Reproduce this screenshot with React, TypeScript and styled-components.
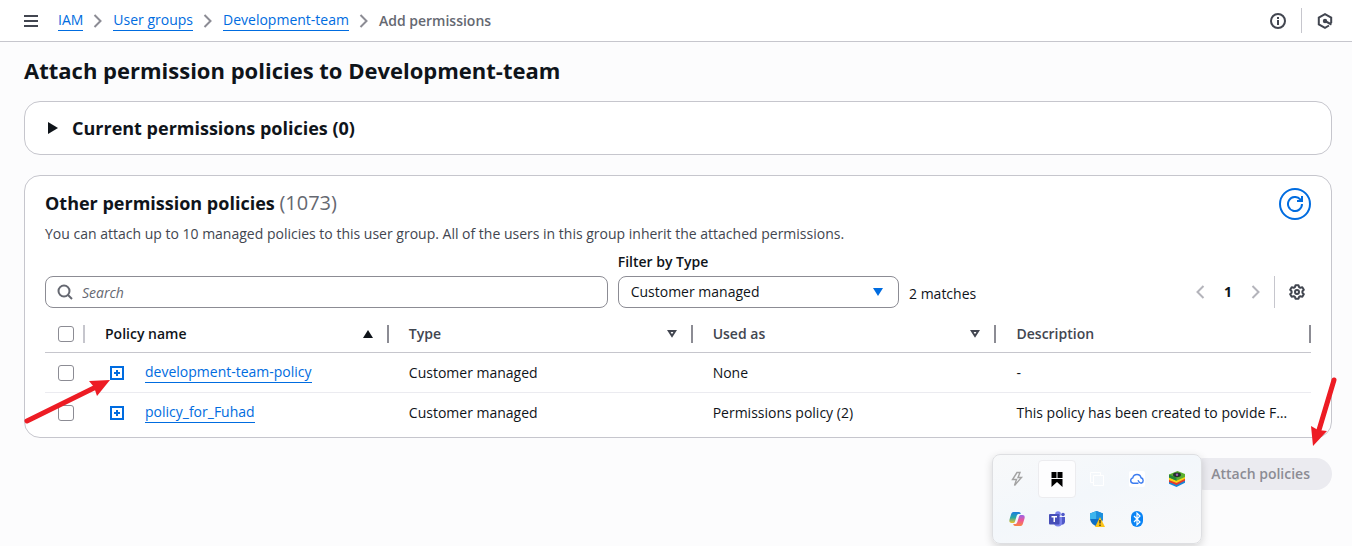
import React from "react";
import styled, { createGlobalStyle } from "styled-components";

const font = `"Open Sans", "Noto Sans", sans-serif`;
const color = {
  text: "#0f141a",
  secondary: "#424650",
  muted: "#656871",
  link: "#006ce0",
  border: "#c6c6cd",
  control: "#8c8c94",
  disabled: "#b4b4bb",
  page: "#fcfcfd",
};

const GlobalStyle = createGlobalStyle`
  *, *::before, *::after { box-sizing: border-box; }
  body { margin: 0; background: ${color.page}; color: ${color.text}; font: 14px/20px ${font}; }
  button, input, select { font: inherit; color: inherit; }
  h1, h2, p, ol { margin: 0; padding: 0; }
`;

const Page = styled.div`
  position: relative;
  min-height: 100vh;
  overflow-x: hidden;
`;

const TopBar = styled.header`
  display: flex;
  align-items: center;
  height: 42px;
  padding: 0 19px 0 23px;
  background: #fff;
  border-bottom: 1px solid ${color.border};
`;

const IconButton = styled.button<{ $accent?: boolean }>`
  display: flex;
  align-items: center;
  justify-content: center;
  width: 16px;
  height: 24px;
  padding: 0;
  border: 0;
  background: none;
  color: ${(p) => (p.$accent ? color.link : color.secondary)};
  &:disabled { color: ${color.disabled}; }
`;

const Crumbs = styled.nav`
  flex: 1;
  margin-left: 19px;
  ol { display: flex; list-style: none; }
  li { display: flex; align-items: center; }
  svg { margin: 0 7px; color: ${color.control}; }
`;

const Link = styled.a`
  color: ${color.link};
  line-height: 20px;
  text-decoration: none;
  border-bottom: 1px solid ${color.link};
`;

const CurrentCrumb = styled.span`
  font-weight: 600;
  color: ${color.muted};
`;

const Divider = styled.span<{ $tall?: boolean }>`
  width: 1px;
  height: ${(p) => (p.$tall ? 32 : 25)}px;
  margin: ${(p) => (p.$tall ? "0 14px 0 10px" : "0 15px")};
  background: ${color.border};
`;

const Main = styled.main`
  display: flex;
  flex-direction: column;
  gap: 20px;
  padding: 12px 20px 20px 24px;
`;

const Title = styled.h1`
  font-size: 22px;
  font-weight: 700;
  line-height: 32px;
  margin-bottom: -5px;
`;

const Card = styled.section`
  background: #fff;
  border: 1px solid ${color.border};
  border-radius: 16px;
`;

const Expander = styled.button`
  display: flex;
  align-items: center;
  gap: 11px;
  width: 100%;
  padding: 14px 20px;
  border: 0;
  background: none;
  font-size: 18px;
  line-height: 24px;
  font-weight: 700;
`;

const CardBody = styled.div`
  padding: 12px 20px 5px;
`;

const CardHeader = styled.div`
  display: flex;
  align-items: flex-start;
  justify-content: space-between;
`;

const CardTitle = styled.h2`
  font-size: 18px;
  font-weight: 700;
  line-height: 30px;
  span { font-size: 20px; font-weight: 400; color: ${color.muted}; }
`;

const Description = styled.p`
  margin-top: 6px;
  color: ${color.secondary};
`;

const RefreshButton = styled.button`
  display: flex;
  align-items: center;
  justify-content: center;
  width: 32px;
  height: 32px;
  padding: 0;
  border: 2px solid ${color.link};
  border-radius: 50%;
  background: #fff;
  color: ${color.link};
`;

const Toolbar = styled.div`
  display: flex;
  align-items: flex-end;
  gap: 10px;
  margin-top: 8px;
`;

const SearchField = styled.label`
  position: relative;
  flex: 2;
  svg { position: absolute; left: 12px; top: 8px; color: ${color.muted}; }
`;

const SearchInput = styled.input`
  display: block;
  width: 100%;
  height: 32px;
  padding: 0 12px 0 36px;
  border: 1px solid ${color.control};
  border-radius: 8px;
  background: #fff;
  &::placeholder { color: ${color.muted}; font-style: italic; opacity: 1; }
`;

const FilterField = styled.div`
  flex: 1;
  label { display: block; margin-bottom: 4px; font-weight: 600; }
`;

const SelectWrap = styled.div`
  position: relative;
  svg { position: absolute; right: 16px; top: 12px; color: ${color.link}; pointer-events: none; }
`;

const Select = styled.select`
  display: block;
  appearance: none;
  width: 100%;
  height: 32px;
  padding: 0 32px 0 12px;
  border: 1px solid ${color.control};
  border-radius: 8px;
  background: #fff;
`;

const Matches = styled.span`
  padding-bottom: 4px;
  width: 273px;
`;

const Pager = styled.div`
  display: flex;
  align-items: center;
  height: 32px;
  padding-right: 6px;
`;

const PageNumber = styled.button`
  width: 40px;
  padding: 0;
  border: 0;
  background: none;
  font-weight: 700;
`;

const Table = styled.table`
  width: 100%;
  margin-top: 8px;
  table-layout: fixed;
  border-collapse: separate;
  border-spacing: 0;
`;

const SelectCol = styled.col`
  width: 40px;
`;

const DataCol = styled.col`
  width: 24%;
`;

const HeadCell = styled.th<{ $faint?: boolean; $active?: boolean }>`
  height: 37px;
  padding: 0;
  border-bottom: 1px solid ${color.border};
  font-weight: 600;
  color: ${(p) => (p.$active ? color.text : color.secondary)};
  > div {
    display: flex;
    align-items: center;
    height: 18px;
    padding-left: 20px;
    border-right: 2px solid ${(p) => (p.$faint ? color.border : color.control)};
  }
`;

const SortButton = styled.button`
  display: flex;
  align-items: center;
  justify-content: space-between;
  flex: 1;
  padding: 0 14px 0 0;
  border: 0;
  background: none;
  font-weight: 600;
`;

const Cell = styled.td`
  height: 39px;
  padding: 0 20px;
  white-space: nowrap;
  tr:not(:last-child) > & { height: 40px; border-bottom: 1px solid #ebebf0; }
`;

const CheckCell = styled(Cell)`
  padding: 0 13px;
`;

const Checkbox = styled.input`
  display: block;
  appearance: none;
  width: 16px;
  height: 16px;
  margin: 0;
  border: 1px solid ${color.control};
  border-radius: 3px;
  background: #fff;
`;

const HeadCheck = styled(Checkbox)`
  margin-left: -7px;
`;

const NameGroup = styled.div`
  display: flex;
  align-items: center;
  gap: 20px;
  padding-left: 4px;
`;

const Actions = styled.div`
  display: flex;
  justify-content: flex-end;
`;

const AttachButton = styled.button`
  height: 32px;
  padding: 0 22px;
  border: 0;
  border-radius: 16px;
  background: #ebebf0;
  font-weight: 600;
  &:disabled { color: ${color.control}; }
`;

const Tray = styled.aside`
  position: absolute;
  top: 454px;
  right: 150px;
  display: grid;
  grid-template-columns: repeat(5, 40px);
  grid-auto-rows: 40px;
  padding: 4px;
  border: 1px solid #dedfe2;
  border-radius: 8px;
  background: linear-gradient(160deg, #f8f9fa, #f3f7fb 45%, #f9f9fa);
  box-shadow: 0 3px 8px rgba(0, 0, 0, 0.16);
`;

const TrayItem = styled.button<{ $active?: boolean }>`
  display: flex;
  align-items: center;
  justify-content: center;
  margin: 1px;
  padding: 0;
  border: 1px solid ${(p) => (p.$active ? "#ececef" : "transparent")};
  border-radius: 4px;
  background: ${(p) => (p.$active ? "#fdfdfe" : "none")};
`;

const LeftArrow = styled.svg`
  position: absolute;
  top: 375px;
  left: 20px;
  pointer-events: none;
`;

const RightArrow = styled.svg`
  position: absolute;
  top: 375px;
  right: 10px;
  pointer-events: none;
`;

const Svg = ({ size = 16, children }: { size?: number; children: React.ReactNode }) => (
  <svg width={size} height={size} viewBox="0 0 16 16" fill="none" stroke="currentColor" strokeWidth="2" aria-hidden="true">
    {children}
  </svg>
);

const MenuIcon = () => <Svg><path d="M1 3h14M1 8h14M1 13h14" /></Svg>;
const ChevronRight = () => <Svg><path d="m4.500 2 6 6-6 6" /></Svg>;
const ChevronLeft = () => <Svg><path d="m11.500 2-6 6 6 6" /></Svg>;
const InfoIcon = () => (
  <Svg>
    <circle cx="8" cy="8" r="7" />
    <path d="M8 7v5M8 4v2" />
  </Svg>
);
const HexIcon = () => (
  <Svg>
    <path d="M14.200 10V4.600L8 1.200 1.800 4.600v6.800L8 14.800l4-2.300M8 8l6.500 3.500" />
    <circle cx="8" cy="8" r="2.200" fill="currentColor" stroke="none" />
  </Svg>
);
const SearchIcon = () => (
  <Svg>
    <circle cx="7" cy="7" r="5.500" />
    <path d="m11 11 4 4" />
  </Svg>
);
const RefreshIcon = () => (
  <Svg>
    <path d="M15 8A7 7 0 1 1 13.200 3.300L15 5M10 5h5V0" />
  </Svg>
);
const GearIcon = () => (
  <Svg>
    <path
      strokeLinejoin="round"
      d="M6.500 1.200h3l.6 1.900 1.200.7 2-.5 1.500 2.500L13.400 7.300v1.400l1.400 1.500-1.500 2.500-2-.5-1.200.7-.6 1.900h-3l-.6-1.900-1.200-.7-2 .5-1.500-2.500 1.400-1.500V7.300L1.200 5.800l1.500-2.500 2 .5 1.200-.7z"
    />
    <circle cx="8" cy="8" r="2" />
  </Svg>
);
const ExpandIcon = () => (
  <Svg>
    <path d="M2 2h12v12H2zM8 5v6M5 8h6" />
  </Svg>
);
const CaretRight = () => (
  <Svg>
    <path d="M3 2v12L13 8z" fill="currentColor" stroke="none" />
  </Svg>
);
const CaretFilled = () => (
  <svg width="10" height="8" viewBox="0 0 10 8" aria-hidden="true">
    <path d="M0 0h10L5 8z" fill="currentColor" />
  </svg>
);
const SortAsc = () => (
  <svg width="10" height="8" viewBox="0 0 10 8" aria-hidden="true">
    <path d="M0 8h10L5 0z" fill="currentColor" />
  </svg>
);
const SortNone = () => (
  <svg width="10" height="8" viewBox="0 0 10 8" aria-hidden="true">
    <path d="M1.800 1h6.400L5 6z" fill="none" stroke="currentColor" strokeWidth="2" />
  </svg>
);

const trayIcons: { name: string; active?: boolean; art: React.ReactNode }[] = [
  {
    name: "Power",
    art: <path d="M8 1.500 3.500 8.500h4L5.500 14.500l7-8H9L11 1.500z" fill="none" stroke="#a3a3a3" strokeWidth="1.400" />,
  },
  {
    name: "Bookmarks",
    active: true,
    art: <path d="M2.500 1h5v6h-5zM8.500 1h5v6h-5zM2.500 8h11v8L8 11l-5.500 5z" fill="#000" />,
  },
  { name: "Windows", art: <path d="M4.500 4.500h10v10h-10zM11.500 4V1.500h-10v10H4" fill="none" stroke="#fff" /> },
  {
    name: "Cloud drive",
    art: (
      <>
        <rect width="16" height="16" rx="2" fill="#fff" />
        <path
          d="M9.500 12.200H4a2.700 2.700 0 0 1-.2-5.300C4.200 4.800 5.800 3.500 8 3.500s3.700 1.400 4 3.300a2.800 2.800 0 0 1 .2 5.400c-1.800 0-2.400-1.400-3.200-3"
          fill="none"
          stroke="#3c7cf0"
          strokeWidth="1.400"
        />
      </>
    ),
  },
  {
    name: "BlueStacks",
    art: (
      <>
        <path d="m0 10 16-1v2.800L7.500 16 0 12.800z" fill="#1787d8" />
        <path d="m0 8.500 16-1.500v2.800L7.500 14 0 11z" fill="#e63a2e" />
        <path d="m0 6.500 16-1.500v2.800L7.500 12 0 9z" fill="#fbd317" />
        <path d="M0 3.500 8.500 0 16 3v3L7.500 9.800 0 6.500z" fill="#5bb030" />
        <path d="m0 3.500 7.500 3.300v3L0 6.500z" fill="#24843a" />
        <ellipse cx="8" cy="3.800" rx="4" ry="2.400" fill="#24332c" />
        <circle cx="8" cy="3.800" r="1.200" fill="#9b5ab5" />
      </>
    ),
  },
  {
    name: "Copilot",
    art: (
      <>
        <defs>
          <linearGradient id="cpA" x1="0" y1="0" x2="0" y2="1">
            <stop offset="0" stopColor="#1b7be0" />
            <stop offset=".5" stopColor="#28a9a4" />
            <stop offset="1" stopColor="#f3c22a" />
          </linearGradient>
          <linearGradient id="cpB" x1="0" y1="0" x2="0" y2="1">
            <stop offset="0" stopColor="#9a63e8" />
            <stop offset=".5" stopColor="#ef5793" />
            <stop offset="1" stopColor="#f98642" />
          </linearGradient>
        </defs>
        <path d="M4.500 1H10c1 0 1.500.8 1.800 2H9.500C8.500 3 8 4 7.500 5.500l-1.500 5C5.700 11.500 5 12 4 12H2.500C.5 12 0 10.500.5 8.500l1.500-5C2.500 2 3 1 4.500 1z" fill="url(#cpA)" />
        <path d="M11.500 15H6c-1 0-1.500-.8-1.800-2h2.300c1 0 1.500-1 2-2.500l1.500-5c.3-1 1-1.500 2-1.500h1.500c2 0 2.500 1.500 2 3.500l-1.500 5c-.5 1.500-1 2.500-2.500 2.500z" fill="url(#cpB)" />
      </>
    ),
  },
  {
    name: "Teams",
    art: (
      <>
        <circle cx="9" cy="3" r="2.800" fill="#7b83eb" />
        <circle cx="14" cy="3.500" r="1.800" fill="#5059c9" />
        <path d="M11 6h5v5a3 3 0 0 1-4 2.500z" fill="#5059c9" />
        <path d="M5 6h8v5.500a4 4 0 0 1-8 0z" fill="#7b83eb" />
        <rect x="0" y="3" width="10.500" height="10.500" rx="1" fill="#464eb8" />
        <path d="M2.500 5.700h5.500M5.250 5.500V11" stroke="#fff" strokeWidth="1.500" />
      </>
    ),
  },
  {
    name: "Windows Security",
    art: (
      <>
        <path d="M7.500 0 14 2.500V7c0 4-3 7-6.500 8.500C4 14 1 11 1 7V2.500z" fill="#0f6fc6" />
        <path d="M7.500 0v8H1V2.500z" fill="#3cb5ee" />
        <path d="M7.500 0 14 2.500V8H7.500z" fill="#1c8fdd" />
        <path d="m11 6 5 10H6z" fill="#fcc419" />
        <path d="M11 9v3.500M11 13.500V15" stroke="#222" strokeWidth="1.200" />
      </>
    ),
  },
  {
    name: "Bluetooth",
    art: (
      <>
        <rect x="2" width="12" height="16" rx="6" fill="#0a84f5" />
        <path d="m5 5 6 6-3 2.800V2.200L11 5l-6 6" fill="none" stroke="#fff" strokeWidth="1.200" />
      </>
    ),
  },
];

const crumbs = ["IAM", "User groups", "Development-team"];

const policies = [
  { name: "development-team-policy", type: "Customer managed", used: "None", about: "-" },
  {
    name: "policy_for_Fuhad",
    type: "Customer managed",
    used: "Permissions policy (2)",
    about: "This policy has been created to povide F…",
  },
];

export default function App() {
  return (
    <Page>
      <GlobalStyle />
      <TopBar>
        <IconButton aria-label="Open navigation"><MenuIcon /></IconButton>
        <Crumbs aria-label="Breadcrumbs">
          <ol>
            {crumbs.map((c) => (
              <li key={c}>
                <Link href="#">{c}</Link>
                <ChevronRight />
              </li>
            ))}
            <li><CurrentCrumb>Add permissions</CurrentCrumb></li>
          </ol>
        </Crumbs>
        <IconButton aria-label="Info"><InfoIcon /></IconButton>
        <Divider />
        <IconButton aria-label="Assistant"><HexIcon /></IconButton>
      </TopBar>
      <Main>
        <Title>Attach permission policies to Development-team</Title>
        <Card>
          <Expander aria-expanded="false">
            <CaretRight />
            Current permissions policies (0)
          </Expander>
        </Card>
        <Card>
          <CardBody>
            <CardHeader>
              <div>
                <CardTitle>Other permission policies <span>(1073)</span></CardTitle>
                <Description>
                  You can attach up to 10 managed policies to this user group. All of the users in this group inherit the attached permissions.
                </Description>
              </div>
              <RefreshButton aria-label="Refresh"><RefreshIcon /></RefreshButton>
            </CardHeader>
            <Toolbar>
              <SearchField>
                <SearchIcon />
                <SearchInput type="text" placeholder="Search" aria-label="Search" />
              </SearchField>
              <FilterField>
                <label htmlFor="type-filter">Filter by Type</label>
                <SelectWrap>
                  <Select id="type-filter" defaultValue="Customer managed">
                    <option>Customer managed</option>
                  </Select>
                  <CaretFilled />
                </SelectWrap>
              </FilterField>
              <Matches>2 matches</Matches>
              <Pager>
                <IconButton disabled aria-label="Previous page"><ChevronLeft /></IconButton>
                <PageNumber>1</PageNumber>
                <IconButton disabled aria-label="Next page"><ChevronRight /></IconButton>
                <Divider $tall />
                <IconButton aria-label="Preferences"><GearIcon /></IconButton>
              </Pager>
            </Toolbar>
            <Table>
              <colgroup>
                <SelectCol />
                <DataCol />
                <DataCol />
                <DataCol />
                <col />
              </colgroup>
              <thead>
                <tr>
                  <HeadCell $faint><div><HeadCheck type="checkbox" aria-label="Select all policies" /></div></HeadCell>
                  <HeadCell $active><div><SortButton>Policy name<SortAsc /></SortButton></div></HeadCell>
                  <HeadCell><div><SortButton>Type<SortNone /></SortButton></div></HeadCell>
                  <HeadCell><div><SortButton>Used as<SortNone /></SortButton></div></HeadCell>
                  <HeadCell><div>Description</div></HeadCell>
                </tr>
              </thead>
              <tbody>
                {policies.map((p) => (
                  <tr key={p.name}>
                    <CheckCell><Checkbox type="checkbox" aria-label={`Select ${p.name}`} /></CheckCell>
                    <Cell>
                      <NameGroup>
                        <IconButton $accent aria-label={`Expand ${p.name}`}><ExpandIcon /></IconButton>
                        <Link href="#">{p.name}</Link>
                      </NameGroup>
                    </Cell>
                    <Cell>{p.type}</Cell>
                    <Cell>{p.used}</Cell>
                    <Cell>{p.about}</Cell>
                  </tr>
                ))}
              </tbody>
            </Table>
          </CardBody>
        </Card>
        <Actions>
          <AttachButton disabled>Attach policies</AttachButton>
        </Actions>
      </Main>
      <Tray aria-label="System tray">
        {trayIcons.map((t) => (
          <TrayItem key={t.name} $active={t.active} aria-label={t.name}>
            <svg width="16" height="16" viewBox="0 0 16 16" aria-hidden="true">{t.art}</svg>
          </TrayItem>
        ))}
      </Tray>
      <LeftArrow width="95" height="52" aria-hidden="true">
        <path d="M7 46 78 11" stroke="#ed1c24" strokeWidth="5" strokeLinecap="round" />
        <path d="M90 5 69 6l5 6 3 9z" fill="#ed1c24" />
      </LeftArrow>
      <RightArrow width="35" height="75" aria-hidden="true">
        <path d="M27 5 12 55" stroke="#ed1c24" strokeWidth="5" strokeLinecap="round" />
        <path d="M6 71 4 51l7 4 9 1z" fill="#ed1c24" />
      </RightArrow>
    </Page>
  );
}
